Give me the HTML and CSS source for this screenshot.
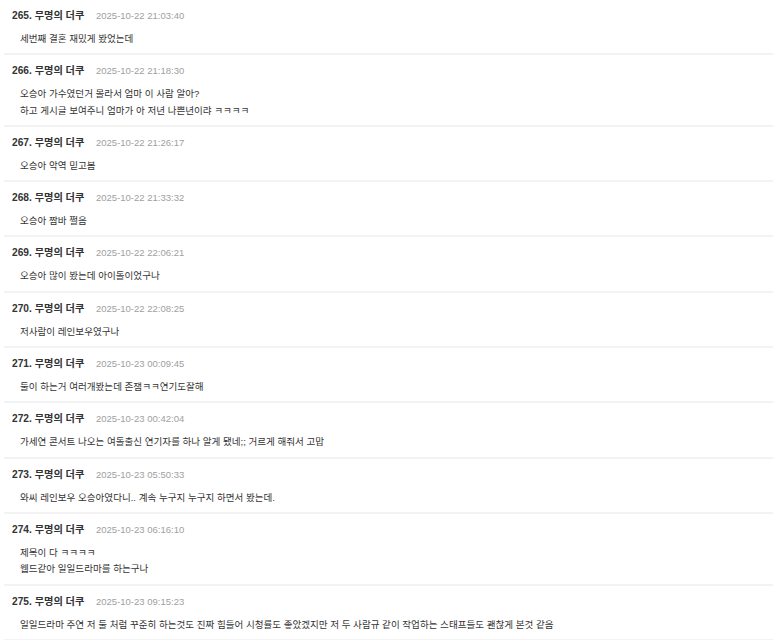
FILE: index.html
```html
<!DOCTYPE html>
<html lang="ko">
<head>
<meta charset="utf-8">
<link rel="stylesheet" href="styles.css">
</head>
<body>
<div class="list">
  <div class="post"><div class="head"><span class="name">265. 무명의 더쿠</span><span class="date">2025-10-22 21:03:40</span></div><div class="body"><p>세번째 결혼 재밌게 봤었는데</p></div></div>
  <div class="post"><div class="head"><span class="name">266. 무명의 더쿠</span><span class="date">2025-10-22 21:18:30</span></div><div class="body"><p>오승아 가수였던거 몰라서 엄마 이 사람 알아?</p><p>하고 게시글 보여주니 엄마가 아 저년 나쁜년이랴 ㅋㅋㅋㅋ</p></div></div>
  <div class="post"><div class="head"><span class="name">267. 무명의 더쿠</span><span class="date">2025-10-22 21:26:17</span></div><div class="body"><p>오승아 악역 믿고봄</p></div></div>
  <div class="post"><div class="head"><span class="name">268. 무명의 더쿠</span><span class="date">2025-10-22 21:33:32</span></div><div class="body"><p>오승아 짬바 쩔음</p></div></div>
  <div class="post"><div class="head"><span class="name">269. 무명의 더쿠</span><span class="date">2025-10-22 22:06:21</span></div><div class="body"><p>오승아 많이 봤는데 아이돌이었구나</p></div></div>
  <div class="post"><div class="head"><span class="name">270. 무명의 더쿠</span><span class="date">2025-10-22 22:08:25</span></div><div class="body"><p>저사람이 레인보우였구나</p></div></div>
  <div class="post"><div class="head"><span class="name">271. 무명의 더쿠</span><span class="date">2025-10-23 00:09:45</span></div><div class="body"><p>둘이 하는거 여러개봤는데 존잼ㅋㅋ연기도잘해</p></div></div>
  <div class="post"><div class="head"><span class="name">272. 무명의 더쿠</span><span class="date">2025-10-23 00:42:04</span></div><div class="body"><p>가세연 콘서트 나오는 여돌출신 연기자를 하나 알게 됐네;; 거르게 해줘서 고맙</p></div></div>
  <div class="post"><div class="head"><span class="name">273. 무명의 더쿠</span><span class="date">2025-10-23 05:50:33</span></div><div class="body"><p>와씨 레인보우 오승아였다니.. 계속 누구지 누구지 하면서 봤는데.</p></div></div>
  <div class="post"><div class="head"><span class="name">274. 무명의 더쿠</span><span class="date">2025-10-23 06:16:10</span></div><div class="body"><p>제목이 다 ㅋㅋㅋㅋ</p><p>웹드같아 일일드라마를 하는구나</p></div></div>
  <div class="post"><div class="head"><span class="name">275. 무명의 더쿠</span><span class="date">2025-10-23 09:15:23</span></div><div class="body"><p>일일드라마 주연 저 둘 처럼 꾸준히 하는것도 진짜 힘들어 시청률도 좋았겠지만 저 두 사람규 같이 작업하는 스태프들도 괜찮게 본것 같음</p></div></div>
</div>
</body>
</html>
```
FILE: styles.css
```css
html, body {
  margin: 0;
  padding: 0;
  background: #ffffff;
}
body {
  font-family: "Liberation Sans", "Noto Sans CJK KR", sans-serif;
  color: #333333;
}
.list {
  margin: 0 5px 0 4px;
}
.post {
  padding: 8px 8px 6px 8px;
  border-bottom: 2px solid #f3f3f3;
}
.head {
  display: flex;
  align-items: baseline;
  line-height: 16px;
  height: 16px;
}
.name {
  font-size: 10.2px;
  font-weight: bold;
  color: #333333;
  width: 84px;
  flex: none;
}
.date {
  font-size: 9.5px;
  color: #a0a0a0;
}
.body {
  margin-top: 7px;
  padding-left: 8px;
  font-size: 9.55px;
  line-height: 16.3px;
  color: #333333;
}
.body p {
  margin: 0;
}
```
